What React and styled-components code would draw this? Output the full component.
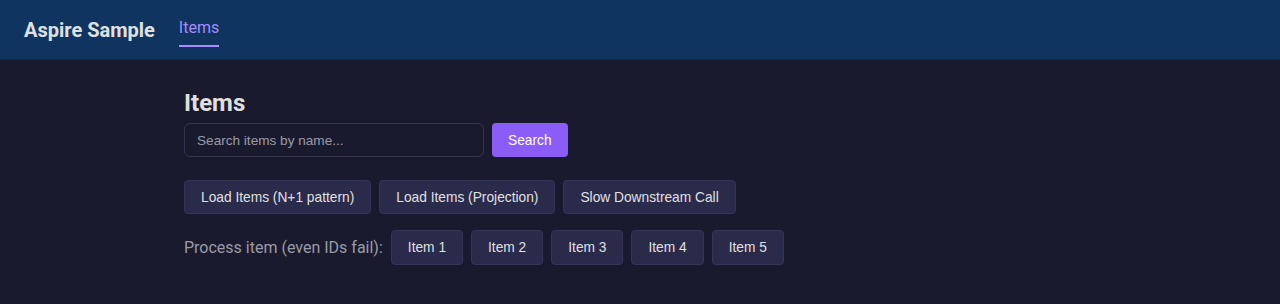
import styled, { createGlobalStyle } from 'styled-components';

const GlobalStyle = createGlobalStyle`
  html, body {
    margin: 0;
    padding: 0;
    background: #1a1a2e;
    font-family: Roboto, "Liberation Sans", Arial, sans-serif;
    color: #e0e0e0;
  }
`;

const Header = styled.header`
  height: 60px;
  background: #0f3460;
  display: flex;
  align-items: center;
  padding: 0 24px;
  gap: 24px;
  box-sizing: border-box;
  border-bottom: 1px solid #13294a;
`;

const Brand = styled.div`
  font-size: 20px;
  font-weight: 700;
  color: #e0e0e0;
`;

const NavLink = styled.a`
  font-size: 16px;
  line-height: 19px;
  color: #a78bfa;
  text-decoration: none;
  padding: 0 0 8px;
  border-bottom: 2px solid #a78bfa;
  margin-top: 6px;
`;

const Main = styled.main`
  max-width: 912px;
  margin: 0 auto;
  padding: 29px 0 24px;
`;

const Title = styled.h2`
  margin: 0 0 6px;
  font-size: 24px;
  line-height: 28px;
  font-weight: 700;
  color: #e0e0e0;
`;

const SearchRow = styled.div`
  display: flex;
  gap: 8px;
  margin-bottom: 23px;
`;

const SearchInput = styled.input`
  width: 300px;
  height: 34px;
  box-sizing: border-box;
  background: #1a1a2e;
  border: 1px solid #33334d;
  border-radius: 6px;
  padding: 0 12px;
  color: #e0e0e0;
  font-family: "Liberation Sans", Arial, sans-serif;
  font-size: 13.6px;
  outline: none;

  &::placeholder {
    color: #9a9aa8;
  }
`;

const PrimaryButton = styled.button`
  height: 34px;
  padding: 0 16px;
  background: #8b5cf6;
  color: #ffffff;
  border: 0;
  border-radius: 4px;
  font-family: "Liberation Sans", Arial, sans-serif;
  font-size: 13.75px;
`;

const ActionRow = styled.div`
  display: flex;
  align-items: center;
  gap: 8px;
  margin-bottom: ${(p) => p.$spacing || 0}px;
`;

const Button = styled.button`
  height: ${(p) => p.$height || 34}px;
  box-sizing: border-box;
  padding: 0 16px;
  background: #2a2a4a;
  color: #e0e0e0;
  border: 1px solid #35355a;
  border-radius: 4px;
  font-family: "Liberation Sans", Arial, sans-serif;
  font-size: 13.75px;
`;

const Label = styled.span`
  font-size: 16px;
  color: #9a9aa8;
`;

export default function App() {
  return (
    <>
      <GlobalStyle />
      <Header>
        <Brand>Aspire Sample</Brand>
        <NavLink href="#">Items</NavLink>
      </Header>
      <Main>
        <Title>Items</Title>
        <SearchRow>
          <SearchInput placeholder="Search items by name..." />
          <PrimaryButton>Search</PrimaryButton>
        </SearchRow>
        <ActionRow $spacing={16}>
          <Button>Load Items (N+1 pattern)</Button>
          <Button>Load Items (Projection)</Button>
          <Button>Slow Downstream Call</Button>
        </ActionRow>
        <ActionRow>
          <Label>Process item (even IDs fail):</Label>
          {[1, 2, 3, 4, 5].map((id) => (
            <Button key={id} $height={35}>Item {id}</Button>
          ))}
        </ActionRow>
      </Main>
    </>
  );
}
